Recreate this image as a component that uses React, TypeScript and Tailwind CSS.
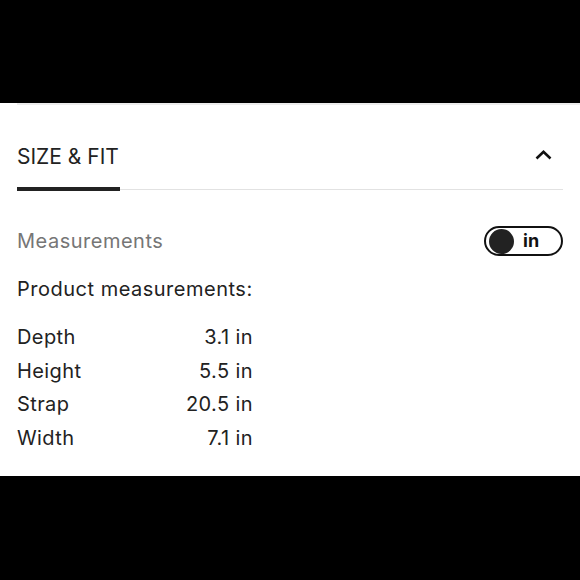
const rows = [
  { label: 'Depth', value: '3.1 in' },
  { label: 'Height', value: '5.5 in' },
  { label: 'Strap', value: '20.5 in' },
  { label: 'Width', value: '7.1 in' },
];

function ChevronUp() {
  return (
    <svg className="h-[10px] w-[17px]" viewBox="0 0 17 10" fill="none" aria-hidden="true">
      <path d="M1.5 8.5L8.5 1.8L15.5 8.5" stroke="#111" strokeWidth={2.6} />
    </svg>
  );
}

function UnitToggle() {
  return (
    <div className="flex h-[30px] w-[79px] items-center rounded-full border-2 border-[#111] pl-[3px]">
      <span className="h-[25px] w-[25px] rounded-full bg-[#222]" />
      <span className="ml-[9px] text-[18px] font-bold leading-none text-[#111]">in</span>
    </div>
  );
}

export default function App() {
  return (
    <div className="flex h-[580px] w-[580px] flex-col bg-black font-['Inter',sans-serif]">
      <div className="h-[103px]" />
      <div className="flex h-[373px] flex-col bg-white">
        <div className="ml-[17px] h-[2px] bg-[#ececec]" />

        {/* Accordion header */}
        <div className="relative mx-[17px] mt-[38px] flex h-[47px] items-start justify-between border-b border-[#e2e2e2]">
          <span className="text-[21px] leading-[28px] text-[#222]">SIZE &amp; FIT</span>
          <div className="mr-[11px] mt-[7px]">
            <ChevronUp />
          </div>
          <div className="absolute -bottom-[2px] left-0 h-[4px] w-[103px] bg-[#222]" />
        </div>

        {/* Measurements + unit toggle */}
        <div className="mx-[17px] mt-[36px] flex items-center justify-between">
          <span className="text-[20px] leading-[29px] tracking-[0.5px] text-[#767676]">Measurements</span>
          <UnitToggle />
        </div>

        <p className="mx-[17px] mt-[19px] text-[20px] leading-[28px] tracking-[0.5px] text-[#222]">Product measurements:</p>

        <div className="mx-[17px] mt-[18px] grid w-[236px] grid-cols-[1fr_auto] text-[20px] leading-[33.7px] tracking-[0.4px] text-[#222]">
          {rows.map((row) => (
            <div key={row.label} className="contents">
              <span>{row.label}</span>
              <span className="text-right">{row.value}</span>
            </div>
          ))}
        </div>
      </div>
      <div className="flex-1" />
    </div>
  );
}
